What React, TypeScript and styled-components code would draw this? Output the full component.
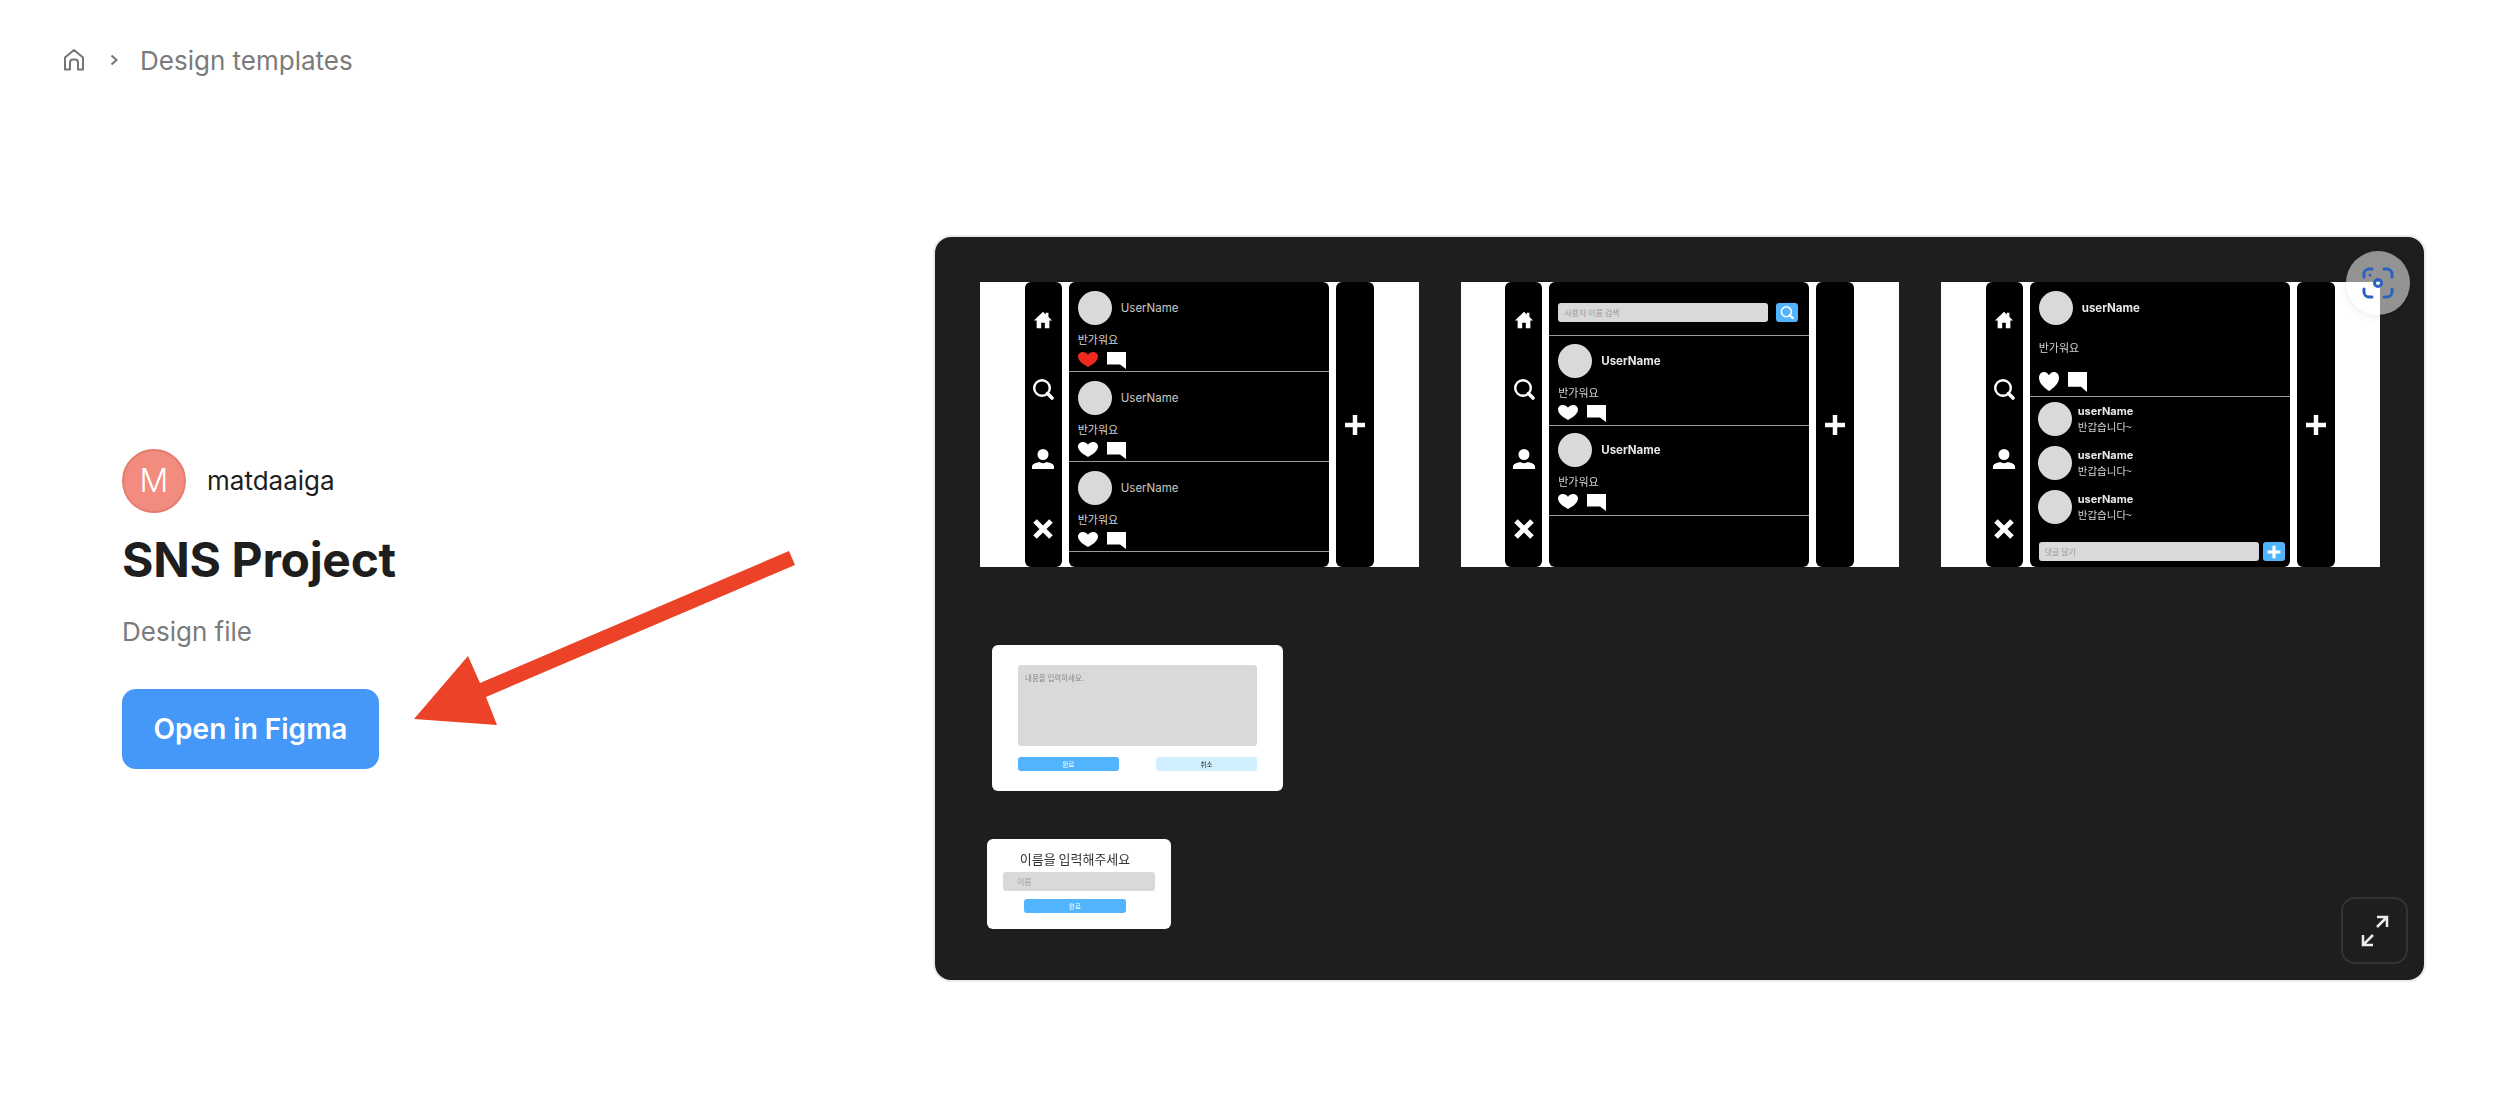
import React from "react";
import styled, { createGlobalStyle } from "styled-components";

const GlobalStyle = createGlobalStyle`
  html, body {
    margin: 0;
    padding: 0;
    background: #fff;
    font-family: Inter, "Noto Sans CJK KR", sans-serif;
  }
`;

const Page = styled.div`
  position: relative;
  width: 2514px;
  height: 1116px;
  overflow: hidden;
  background: #fff;
`;

const Breadcrumb = styled.nav`
  display: flex;
  align-items: center;
  height: 36px;
  padding: 42px 0 0 63px;
  color: #7b7b7b;
  font-size: 26px;
`;

const CrumbSep = styled.span`
  display: flex;
  margin: 0 22px 0 25px;
`;

const Main = styled.main`
  display: flex;
  align-items: center;
  margin-top: 157px;
  padding-left: 122px;
`;

const Info = styled.section`
  display: flex;
  flex-direction: column;
  align-items: flex-start;
  width: 811px;
  flex-shrink: 0;
`;

const AuthorRow = styled.div`
  display: flex;
  align-items: center;
  gap: 21px;
`;

const AuthorAvatar = styled.div`
  display: flex;
  align-items: center;
  justify-content: center;
  box-sizing: border-box;
  width: 64px;
  height: 64px;
  border-radius: 50%;
  background: #f18c7e;
  border: 2px solid #e47d6e;
  color: #fff;
  font-size: 32px;
  font-weight: 300;
`;

const AuthorName = styled.span`
  color: #1e1e1e;
  font-size: 26px;
`;

const Title = styled.h1`
  margin: 17px 0 0;
  color: #1e1e1e;
  font-size: 48px;
  font-weight: 700;
  line-height: 60px;
  letter-spacing: -0.3px;
`;

const Kind = styled.p`
  margin: 26px 0 0;
  color: #7b7b7b;
  font-size: 26px;
  line-height: 32px;
`;

const OpenButton = styled.button`
  width: 257px;
  height: 80px;
  margin-top: 41px;
  padding: 0;
  border: 0;
  border-radius: 14px;
  background: #4597f8;
  color: #fff;
  font-family: inherit;
  font-size: 28px;
  font-weight: 600;
`;

const Pointer = styled.svg`
  position: absolute;
  left: 400px;
  top: 540px;
`;

const Preview = styled.section`
  position: relative;
  box-sizing: border-box;
  width: 1493px;
  height: 747px;
  flex-shrink: 0;
  border: 2px solid #ececec;
  border-radius: 18px;
  background: #1e1e1e;
  overflow: hidden;
`;

const Canvas = styled.div`
  display: flex;
  flex-direction: column;
  align-items: flex-start;
  padding: 45px 0 0 45px;
  filter: blur(0.75px);
`;

const FrameRow = styled.div`
  display: flex;
  gap: 42px;
`;

const Frame = styled.div`
  display: flex;
  justify-content: center;
  gap: 7px;
  width: 438.5px;
  height: 285px;
  background: #fff;
`;

const SideBar = styled.div`
  display: flex;
  flex-direction: column;
  align-items: center;
  justify-content: space-between;
  box-sizing: border-box;
  width: 37px;
  padding: 27px 0;
  border-radius: 6px;
  background: #000;
`;

const GlyphSlot = styled.div`
  display: flex;
  align-items: center;
  justify-content: center;
  height: 22px;
`;

const AddBar = styled.div`
  display: flex;
  align-items: center;
  justify-content: center;
  width: 38px;
  border-radius: 6px;
  background: #000;
`;

const Feed = styled.div`
  display: flex;
  flex-direction: column;
  width: 260px;
  border-radius: 6px;
  background: #000;
  overflow: hidden;
`;

const PostRow = styled.div<{ $top?: number }>`
  box-sizing: border-box;
  height: 90px;
  padding: ${(p) => p.$top ?? 9}px 9px 0;
  border-bottom: 1px solid #999;
`;

const PostHead = styled.div`
  display: flex;
  align-items: center;
  gap: 9px;
`;

const Avatar = styled.div`
  width: 34px;
  height: 34px;
  flex-shrink: 0;
  border-radius: 50%;
  background: #d9d9d9;
`;

const UserName = styled.span<{ $bold?: boolean }>`
  color: ${(p) => (p.$bold ? "#e8e8e8" : "#c8c8c8")};
  font-size: 11.5px;
  font-weight: ${(p) => (p.$bold ? 700 : 400)};
`;

const PostText = styled.div<{ $gap?: number }>`
  margin-top: ${(p) => p.$gap ?? 6}px;
  color: #d4d4d4;
  font-family: "Noto Sans CJK KR", sans-serif;
  font-size: 11px;
  line-height: 16px;
`;

const Actions = styled.div<{ $gap?: number }>`
  display: flex;
  align-items: flex-start;
  gap: 9px;
  margin-top: ${(p) => p.$gap ?? 5}px;
`;

const SearchRow = styled.div`
  display: flex;
  align-items: center;
  gap: 8px;
  box-sizing: border-box;
  height: 54px;
  padding: 21px 9px 13px;
  border-bottom: 1px solid #999;
`;

const FieldBar = styled.div<{ $width: number }>`
  display: flex;
  align-items: center;
  box-sizing: border-box;
  width: ${(p) => p.$width}px;
  height: 19px;
  padding-left: 6px;
  border-radius: 3px;
  background: #d9d9d9;
  color: #9a9a9a;
  font-family: "Noto Sans CJK KR", sans-serif;
  font-size: 8px;
`;

const IconButton = styled.div`
  display: flex;
  align-items: center;
  justify-content: center;
  width: 22px;
  height: 19px;
  border-radius: 3px;
  background: #52b4ff;
`;

const Detail = styled.div`
  box-sizing: border-box;
  height: 115px;
  padding: 9px 9px 0;
  border-bottom: 1px solid #999;
`;

const Comments = styled.div`
  display: flex;
  flex-direction: column;
  gap: 10px;
  padding: 5px 0 0 8px;
`;

const CommentRow = styled.div`
  display: flex;
  align-items: center;
  gap: 6px;
`;

const CommentBody = styled.div`
  display: flex;
  flex-direction: column;
`;

const CommentName = styled.span`
  color: #e8e8e8;
  font-size: 11px;
  font-weight: 700;
  line-height: 15px;
`;

const CommentText = styled.span`
  color: #d4d4d4;
  font-family: "Noto Sans CJK KR", sans-serif;
  font-size: 10.5px;
  line-height: 16px;
`;

const ReplyRow = styled.div`
  display: flex;
  gap: 4px;
  margin-top: auto;
  padding: 0 0 6px 9px;
`;

const Modal = styled.div<{ $left: number; $top: number; $w: number; $h: number }>`
  display: flex;
  flex-direction: column;
  box-sizing: border-box;
  width: ${(p) => p.$w}px;
  height: ${(p) => p.$h}px;
  margin: ${(p) => p.$top}px 0 0 ${(p) => p.$left}px;
  border-radius: 6px;
  background: #fff;
`;

const EditModal = styled(Modal)`
  padding: 20px 26px;
`;

const NameModal = styled(Modal)`
  align-items: center;
  padding: 12px 8px 0 0;
`;

const TextArea = styled.div`
  box-sizing: border-box;
  height: 81px;
  padding: 7px;
  border-radius: 3px;
  background: #d9d9d9;
  color: #8a8a8a;
  font-family: "Noto Sans CJK KR", sans-serif;
  font-size: 7.5px;
`;

const ModalActions = styled.div`
  display: flex;
  justify-content: space-between;
  margin-top: 11px;
`;

const ModalButton = styled.div<{ $cancel?: boolean; $width?: number; $gap?: number }>`
  display: flex;
  align-items: center;
  justify-content: center;
  width: ${(p) => p.$width ?? 101}px;
  height: 14px;
  margin-top: ${(p) => p.$gap ?? 0}px;
  border-radius: 3px;
  background: ${(p) => (p.$cancel ? "#d2efff" : "#52b4ff")};
  color: ${(p) => (p.$cancel ? "#222" : "#fff")};
  font-family: "Noto Sans CJK KR", sans-serif;
  font-size: 6.5px;
`;

const NameTitle = styled.div`
  color: #333;
  font-family: "Noto Sans CJK KR", sans-serif;
  font-size: 13px;
  line-height: 16px;
`;

const NameField = styled.div`
  display: flex;
  align-items: center;
  box-sizing: border-box;
  width: 152px;
  height: 19px;
  margin: 5px 0 0 8px;
  padding-left: 14px;
  border-radius: 3px;
  background: #d9d9d9;
  color: #a0a0a0;
  font-family: "Noto Sans CJK KR", sans-serif;
  font-size: 8px;
`;

const ScanButton = styled.div`
  position: absolute;
  top: 14px;
  right: 14px;
  display: flex;
  align-items: center;
  justify-content: center;
  width: 64px;
  height: 64px;
  border-radius: 50%;
  background: rgba(255, 255, 255, 0.52);
  box-shadow: 0 2px 10px rgba(0, 0, 0, 0.08);
`;

const ExpandButton = styled.div`
  position: absolute;
  right: 16px;
  bottom: 16px;
  display: flex;
  align-items: center;
  justify-content: center;
  box-sizing: border-box;
  width: 67px;
  height: 67px;
  border: 2px solid #333;
  border-radius: 14px;
  background: #1e1e1e;
`;

const HomeGlyph = () => (
  <svg width="20" height="20" viewBox="0 0 22 22" fill="#fff">
    <path d="M11 2 1 11.5h3V20h5v-6h4v6h5v-8.500h3l-4-3.800V3h-3v1.900z" />
  </svg>
);

const SearchGlyph = ({ size = 22 }: { size?: number }) => (
  <svg width={size} height={size} viewBox="0 1 22 22" fill="none" stroke="#fff">
    <circle cx="10" cy="10" r="7.800" strokeWidth="2.400" />
    <path d="m15.500 15.500 4.500 4.500" strokeWidth="3.600" strokeLinecap="round" />
  </svg>
);

const UserGlyph = () => (
  <svg width="22" height="22" viewBox="0 0 22 22" fill="#fff">
    <circle cx="11" cy="6.500" r="5.500" />
    <path d="M0 21v-2.500c0-2.500 3-3.500 7-4.500 2.500 1.500 5.500 1.500 8 0 4 1 7 2 7 4.500V21z" />
  </svg>
);

const CloseGlyph = () => (
  <svg width="22" height="22" viewBox="0 0 22 22" stroke="#fff" strokeWidth="5">
    <path d="m3 3 16 16M19 3 3 19" />
  </svg>
);

const PlusGlyph = ({ size = 22, weight = 4.500 }: { size?: number; weight?: number }) => (
  <svg width={size} height={size} viewBox="0 0 22 22" stroke="#fff" strokeWidth={weight}>
    <path d="M11 1v20M1 11h20" />
  </svg>
);

const Heart = ({ red, tall }: { red?: boolean; tall?: boolean }) => (
  <svg width="20" height={tall ? 19 : 15} viewBox="0 0 20 16" preserveAspectRatio="none" fill={red ? "#f0281e" : "#fff"}>
    <path d="M10 16C6 13.500 0 10 0 4.800 0 2 2.200 0 5 0c2 0 3.800 1 5 2.800C11.200 1 13 0 15 0c2.800 0 5 2 5 4.800C20 10 14 13.500 10 16z" />
  </svg>
);

const Bubble = ({ tall }: { tall?: boolean }) => (
  <svg width="19" height={tall ? 20 : 17} viewBox="0 0 19 17" preserveAspectRatio="none" fill="#fff">
    <path d="M0 0h19v17l-6-4.500H0z" />
  </svg>
);

const ScanIcon = () => (
  <svg width="32" height="32" viewBox="0 0 32 32" fill="none" stroke="#2a62c0" strokeWidth="3" strokeLinecap="round">
    <path d="M2 10V7a5 5 0 0 1 5-5h3M22 2h3a5 5 0 0 1 5 5v3M30 22v3a5 5 0 0 1-5 5h-3M10 30H7a5 5 0 0 1-5-5v-3" />
    <circle cx="16" cy="16" r="3.500" />
    <circle cx="8" cy="8" r="1.500" fill="#2a62c0" stroke="none" />
  </svg>
);

const ExpandIcon = () => (
  <svg width="32" height="32" viewBox="0 0 32 32" fill="none" stroke="#ececec" strokeWidth="2.500">
    <path d="M18 12 28 2M18 2h10v10M14 20 4 30M14 30H4V20" />
  </svg>
);

const SideIcons = () => (
  <SideBar>
    <GlyphSlot>
      <HomeGlyph />
    </GlyphSlot>
    <GlyphSlot>
      <SearchGlyph />
    </GlyphSlot>
    <GlyphSlot>
      <UserGlyph />
    </GlyphSlot>
    <GlyphSlot>
      <CloseGlyph />
    </GlyphSlot>
  </SideBar>
);

const AddColumn = () => (
  <AddBar>
    <PlusGlyph />
  </AddBar>
);

type PostProps = { bold?: boolean; red?: boolean; top?: number };

const Post = ({ bold, red, top }: PostProps) => (
  <PostRow $top={top}>
    <PostHead>
      <Avatar />
      <UserName $bold={bold}>UserName</UserName>
    </PostHead>
    <PostText>반가워요</PostText>
    <Actions>
      <Heart red={red} />
      <Bubble />
    </Actions>
  </PostRow>
);

const Comment = () => (
  <CommentRow>
    <Avatar />
    <CommentBody>
      <CommentName>userName</CommentName>
      <CommentText>반갑습니다~</CommentText>
    </CommentBody>
  </CommentRow>
);

export default function App() {
  return (
    <Page>
      <GlobalStyle />
      <Breadcrumb>
        <svg width="22" height="24" viewBox="0 0 22 24" fill="none" stroke="#757575" strokeWidth="2" strokeLinejoin="round">
          <path d="M2 21.500V9.500L11 2l9 7.500v12h-5v-7a3 3 0 0 0-3-3h-2a3 3 0 0 0-3 3v7z" />
        </svg>
        <CrumbSep>
          <svg width="8" height="12" viewBox="0 0 8 12" fill="none" stroke="#757575" strokeWidth="2">
            <path d="m1.500 1.500 5 4.500-5 4.500" />
          </svg>
        </CrumbSep>
        Design templates
      </Breadcrumb>
      <Main>
        <Info>
          <AuthorRow>
            <AuthorAvatar>M</AuthorAvatar>
            <AuthorName>matdaaiga</AuthorName>
          </AuthorRow>
          <Title>SNS Project</Title>
          <Kind>Design file</Kind>
          <OpenButton>Open in Figma</OpenButton>
        </Info>
        <Preview>
          <Canvas>
            <FrameRow>
              <Frame>
                <SideIcons />
                <Feed>
                  <Post red />
                  <Post />
                  <Post />
                </Feed>
                <AddColumn />
              </Frame>
              <Frame>
                <SideIcons />
                <Feed>
                  <SearchRow>
                    <FieldBar $width={210}>사용자 이름 검색</FieldBar>
                    <IconButton>
                      <SearchGlyph size={14} />
                    </IconButton>
                  </SearchRow>
                  <Post bold top={8} />
                  <Post bold top={7} />
                </Feed>
                <AddColumn />
              </Frame>
              <Frame>
                <SideIcons />
                <Feed>
                  <Detail>
                    <PostHead>
                      <Avatar />
                      <UserName $bold>userName</UserName>
                    </PostHead>
                    <PostText $gap={14}>반가워요</PostText>
                    <Actions $gap={17}>
                      <Heart tall />
                      <Bubble tall />
                    </Actions>
                  </Detail>
                  <Comments>
                    <Comment />
                    <Comment />
                    <Comment />
                  </Comments>
                  <ReplyRow>
                    <FieldBar $width={220}>댓글 달기</FieldBar>
                    <IconButton>
                      <PlusGlyph size={14} weight={5} />
                    </IconButton>
                  </ReplyRow>
                </Feed>
                <AddColumn />
              </Frame>
            </FrameRow>
            <EditModal $left={12} $top={78} $w={291} $h={146}>
              <TextArea>내용을 입력하세요.</TextArea>
              <ModalActions>
                <ModalButton>완료</ModalButton>
                <ModalButton $cancel>취소</ModalButton>
              </ModalActions>
            </EditModal>
            <NameModal $left={7} $top={48} $w={184} $h={90}>
              <NameTitle>이름을 입력해주세요</NameTitle>
              <NameField>이름</NameField>
              <ModalButton $width={102} $gap={8}>완료</ModalButton>
            </NameModal>
          </Canvas>
          <ScanButton>
            <ScanIcon />
          </ScanButton>
          <ExpandButton>
            <ExpandIcon />
          </ExpandButton>
        </Preview>
      </Main>
      <Pointer width="410" height="200" viewBox="400 540 410 200">
        <polygon fill="#ec4227" points="789,551 795,565 486,697 497,725 414,719 468,656 480,683" />
      </Pointer>
    </Page>
  );
}
